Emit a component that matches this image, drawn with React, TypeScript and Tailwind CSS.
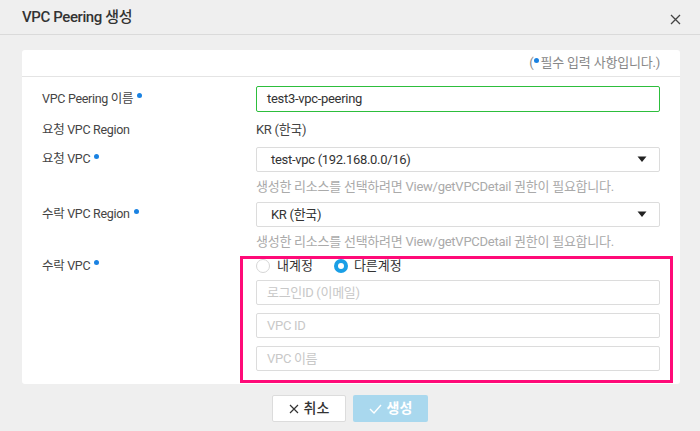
import React from "react";

const FONT = { fontFamily: "Roboto, 'Noto Sans CJK KR', sans-serif" };

function Dot() {
  return <span className="ml-[4px] mb-[7px] inline-block h-[5px] w-[5px] rounded-full bg-[#1a82e2]" />;
}

function Label({ text, required }: { text: string; required?: boolean }) {
  return (
    <div className="flex w-[214px] shrink-0 items-center text-[12.5px] tracking-[-0.3px] text-[#444]">
      <span>{text}</span>
      {required ? <Dot /> : null}
    </div>
  );
}

function Caret() {
  return (
    <svg width="10" height="7" viewBox="0 0 10 7" className="mr-[12px]">
      <path d="M0.5 0.5h9L5 6z" fill="#222" />
    </svg>
  );
}

function Select({ value }: { value: string }) {
  return (
    <div className="flex h-[25px] flex-1 items-center justify-between rounded-[2px] border border-[#dcdcdc] bg-white pl-[14px] text-[13px] tracking-[-0.3px] text-[#333]">
      <span>{value}</span>
      <Caret />
    </div>
  );
}

function Hint() {
  return (
    <div className="ml-[214px] mt-[5px] h-[19px] text-[13px] leading-[19px] tracking-[-0.25px] text-[#aaa]">
      생성한 리소스를 선택하려면 View/getVPCDetail 권한이 필요합니다.
    </div>
  );
}

function TextBox({ placeholder, className = "" }: { placeholder: string; className?: string }) {
  return (
    <div
      className={`flex h-[25px] items-center rounded-[2px] border border-[#dcdcdc] bg-white pl-[10px] text-[13px] tracking-[-0.3px] text-[#c8c8c8] ${className}`}
    >
      {placeholder}
    </div>
  );
}

export default function App() {
  return (
    <div className="relative h-[431px] w-[700px] overflow-hidden bg-[#efefef]" style={FONT}>
      {/* header */}
      <div className="flex h-[35px] items-center justify-between border-b border-[#dadada] pl-[22px] pr-[19px]">
        <div className="text-[15px] font-medium tracking-[-0.4px] text-[#333]">VPC Peering 생성</div>
        <svg width="11" height="11" viewBox="0 0 11 11" className="mt-[4px]">
          <path d="M1 1l9 9M10 1l-9 9" stroke="#444" strokeWidth="1.3" />
        </svg>
      </div>

      <div className="px-[22px] pt-[15px]">
        <div className="h-[334px] w-[658px] rounded-[3px] bg-white">
          <div className="flex h-[27px] items-center justify-end border-b border-[#e4e4e4] pr-[20px] text-[13px] tracking-[-0.2px] text-[#888]">
            (<span className="mb-[5px] mr-[2px] inline-block h-[5px] w-[5px] rounded-full bg-[#1a82e2]" />필수 입력 사항입니다.)
          </div>

          <div className="px-[20px] pt-[9px]">
            <div className="flex items-center">
              <Label text="VPC Peering 이름" required />
              <div className="flex h-[26px] flex-1 items-center rounded-[2px] border border-[#2dbe3c] pl-[10px] text-[13px] tracking-[-0.3px] text-[#333]">
                test3-vpc-peering
              </div>
            </div>

            <div className="mt-[8px] flex h-[20px] items-center">
              <Label text="요청 VPC Region" />
              <span className="text-[13px] tracking-[-0.3px] text-[#444]">KR (한국)</span>
            </div>

            <div className="mt-[7px] flex items-center">
              <Label text="요청 VPC" required />
              <Select value="test-vpc (192.168.0.0/16)" />
            </div>
            <Hint />

            <div className="mt-[6px] flex items-center">
              <Label text="수락 VPC Region" required />
              <Select value="KR (한국)" />
            </div>
            <Hint />

            <div className="mt-[6px] flex items-start">
              <div className="flex h-[18px] items-center">
                <Label text="수락 VPC" required />
              </div>
              <div className="flex flex-1 flex-col">
                <div className="flex h-[18px] items-center text-[13px] text-[#333]">
                  <span className="h-[14px] w-[14px] rounded-full border border-[#d6d6d6] bg-white" />
                  <span className="ml-[7px]">내계정</span>
                  <span className="ml-[21px] flex h-[14px] w-[14px] items-center justify-center rounded-full bg-[#1a9fe6]">
                    <span className="h-[6px] w-[6px] rounded-full bg-white" />
                  </span>
                  <span className="ml-[6px]">다른계정</span>
                </div>
                <TextBox placeholder="로그인ID (이메일)" className="mt-[5px]" />
                <TextBox placeholder="VPC ID" className="mt-[8px]" />
                <TextBox placeholder="VPC 이름" className="mt-[8px]" />
              </div>
            </div>
          </div>
        </div>

        <div className="mt-[11px] flex justify-center gap-[7px]">
          <div className="flex h-[27px] w-[74px] items-center justify-center gap-[5px] rounded-[2px] border border-[#dcdcdc] bg-white text-[14px] font-medium text-[#333]">
            <svg width="10" height="10" viewBox="0 0 10 10">
              <path d="M1 1l8 8M9 1l-8 8" stroke="#333" strokeWidth="1.2" />
            </svg>
            취소
          </div>
          <div className="flex h-[27px] w-[75px] items-center justify-center gap-[5px] rounded-[2px] bg-[#a9d8ee] text-[14px] font-bold text-white">
            <svg width="13" height="10" viewBox="0 0 13 10">
              <path d="M1 5l4 4 7-8" stroke="#fff" strokeWidth="1.4" fill="none" />
            </svg>
            생성
          </div>
        </div>
      </div>

      {/* annotation highlight */}
      <div className="pointer-events-none absolute left-[240px] top-[256px] h-[127px] w-[433px] border-[3px] border-[#ff0a78]" />
    </div>
  );
}
